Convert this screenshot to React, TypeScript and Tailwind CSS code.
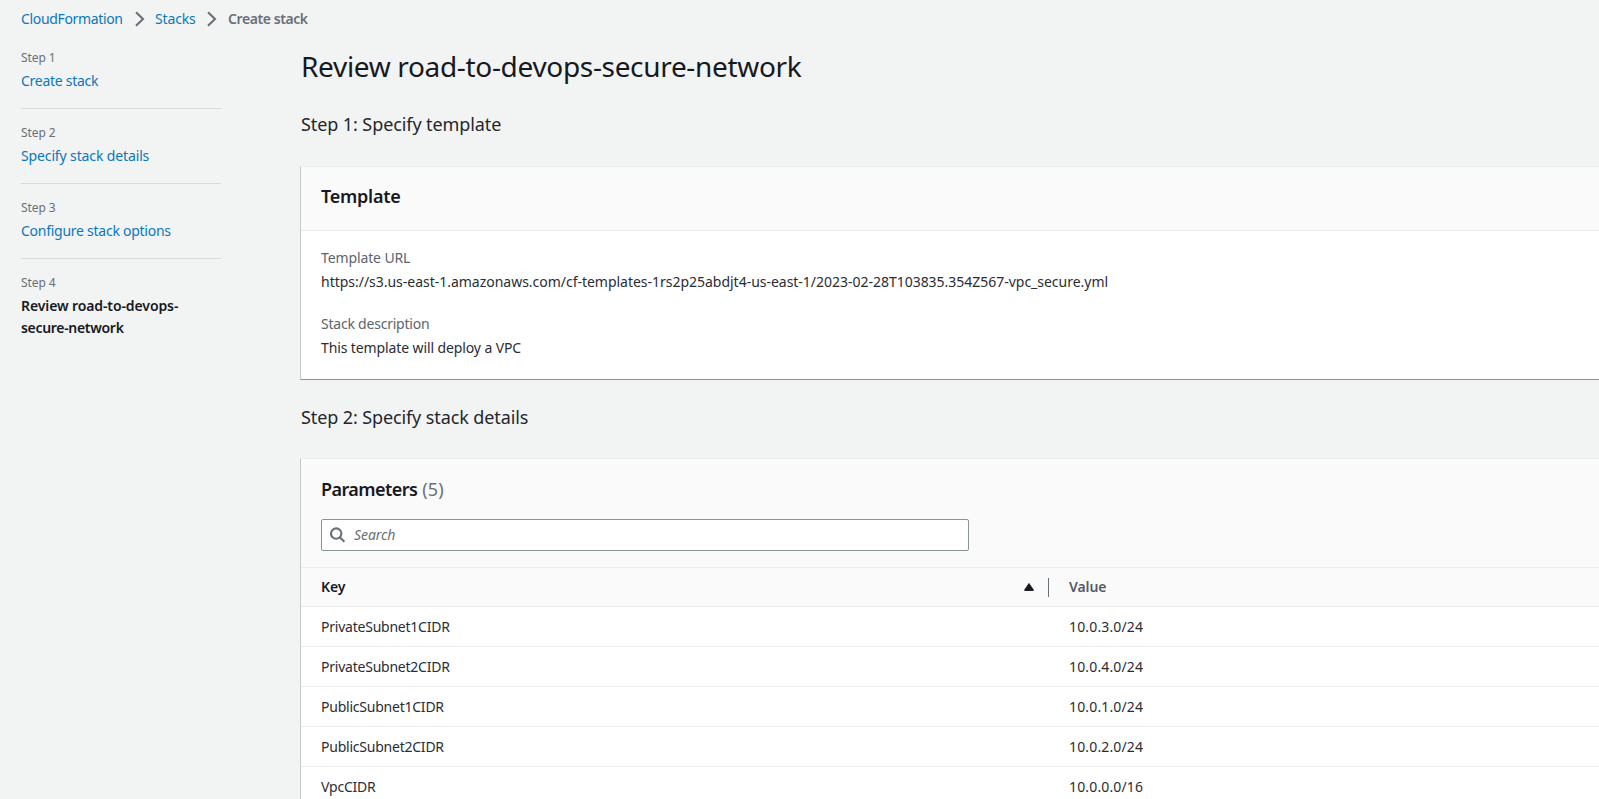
import type { ReactNode } from "react";

const steps = [
  { label: "Step 1", title: "Create stack", spacing: "tracking-[-0.27px]" },
  { label: "Step 2", title: "Specify stack details", spacing: "tracking-[-0.13px]" },
  { label: "Step 3", title: "Configure stack options", spacing: "tracking-[-0.26px]" },
];

const parameters = [
  { key: "PrivateSubnet1CIDR", value: "10.0.3.0/24" },
  { key: "PrivateSubnet2CIDR", value: "10.0.4.0/24" },
  { key: "PublicSubnet1CIDR", value: "10.0.1.0/24" },
  { key: "PublicSubnet2CIDR", value: "10.0.2.0/24" },
  { key: "VpcCIDR", value: "10.0.0.0/16" },
];

function Chevron() {
  return (
    <svg width="10" height="16" viewBox="0 0 10 16" fill="none" stroke="#687078" strokeWidth="2.1" className="shrink-0">
      <path d="M1 1.2l7 6.8-7 6.8" />
    </svg>
  );
}

function Card({ children, className }: { children: ReactNode; className: string }) {
  return (
    <section
      className={`border-t border-l border-t-[#eaeded] border-l-[#c4cacb] bg-white ${className}`}
    >
      {children}
    </section>
  );
}

export default function App() {
  return (
    <div className="flex h-[799px] w-[1599px] flex-col overflow-hidden bg-[#f2f3f3] font-['Noto_Sans',sans-serif] text-sm leading-[22px] text-[#16191f]">
      <nav className="flex h-[38px] shrink-0 items-center pl-[21px] text-[#0978be]">
        <a className="w-[102px] tracking-[-0.34px]">CloudFormation</a>
        <span className="ml-3 flex w-5 items-center">
          <Chevron />
        </span>
        <a className="w-[41px] tracking-[-0.14px]">Stacks</a>
        <span className="ml-[11px] flex w-[21px] items-center">
          <Chevron />
        </span>
        <span className="font-semibold tracking-[-0.42px] text-[#687078]">Create stack</span>
      </nav>

      <div className="flex min-h-0 flex-1">
        <aside className="ml-[21px] w-[200px] shrink-0 pt-[9px]">
          {steps.map((step) => (
            <div key={step.label} className="mb-[13px] h-[62px] border-b border-[#d5dbdb]">
              <div className="text-xs leading-[22px] tracking-[-0.09px] text-[#687078]">{step.label}</div>
              <a className={`mt-px block text-[#0978be] ${step.spacing}`}>{step.title}</a>
            </div>
          ))}
          <div>
            <div className="text-xs leading-[22px] tracking-[-0.09px] text-[#687078]">Step 4</div>
            <div className="mt-px font-semibold">
              <div className="tracking-[-0.1px]">Review road-to-devops-</div>
              <div className="tracking-[-0.31px]">secure-network</div>
            </div>
          </div>
        </aside>

        <main className="ml-[79px] flex min-w-0 flex-1 flex-col">
          <h1 className="mt-[10px] ml-px h-[36px] shrink-0 text-[28px] leading-[36px] tracking-[-0.33px]">
            Review road-to-devops-secure-network
          </h1>
          <h2 className="mt-[29px] ml-px h-[22px] shrink-0 text-lg leading-[22px] tracking-[-0.09px] text-[#23262c]">
            Step 1: Specify template
          </h2>

          <Card className="mt-[31px] h-[214px] shrink-0 border-b border-b-[#879596]">
            <header className="flex h-[64px] items-center border-b border-[#eaeded] bg-[#fafafa] pb-1.5 pl-5">
              <h3 className="text-lg font-semibold tracking-[-0.25px]">Template</h3>
            </header>
            <div className="pt-4 pl-5">
              <div className="tracking-[-0.12px] text-[#5d646d]">Template URL</div>
              <div className="mt-0.5 tracking-[-0.02px] text-[#2a2d33]">
                https://s3.us-east-1.amazonaws.com/cf-templates-1rs2p25abdjt4-us-east-1/2023-02-28T103835.354Z567-vpc_secure.yml
              </div>
              <div className="mt-5 tracking-[-0.22px] text-[#5d646d]">Stack description</div>
              <div className="mt-0.5 tracking-[-0.11px] text-[#2a2d33]">This template will deploy a VPC</div>
            </div>
          </Card>

          <h2 className="mt-[26px] ml-px h-[22px] shrink-0 text-lg leading-[22px] tracking-[-0.11px] text-[#23262c]">
            Step 2: Specify stack details
          </h2>

          <Card className="mt-[30px] h-[360px] shrink-0">
            <header className="h-[109px] border-b border-[#eaeded] bg-[#fafafa] pt-[19px] pl-5">
              <h3 className="flex gap-[5px] text-lg leading-[22px] font-semibold">
                <span className="tracking-[-0.57px]">Parameters</span>
                <span className="font-normal tracking-[0.2px] text-[#687078]">(5)</span>
              </h3>
              <div className="mt-[19px] flex h-8 w-[648px] items-center rounded-xs border border-[#879596] bg-white pl-2">
                <svg width="16" height="16" viewBox="0 0 16 16" fill="none" stroke="#687078" strokeWidth="2.1">
                  <circle cx="6.2" cy="6.6" r="5.2" />
                  <path d="M10 10.4l4.4 4.4" />
                </svg>
                <span className="ml-2 tracking-[-0.08px] text-[#687078] italic">Search</span>
              </div>
            </header>
            <div className="flex h-[39px] items-center border-b border-[#eaeded] bg-[#fafafa] font-semibold">
              <div className="flex w-[748px] items-center justify-between pl-5">
                <span className="tracking-[-0.05px]">Key</span>
                <span className="flex h-[19px] items-center border-r border-[#687078] pr-[14px]">
                  <svg width="10" height="8" viewBox="0 0 10 8" fill="#16191f" stroke="#16191f" strokeLinejoin="round">
                    <path d="M5 .6l4.3 6.3v.5H.7v-.5z" />
                  </svg>
                </span>
              </div>
              <span className="pl-5 tracking-[-0.1px] text-[#545b64]">Value</span>
            </div>
            {parameters.map((p) => (
              <div key={p.key} className="flex h-10 items-center border-b border-[#eaeded] text-[#2a2d33]">
                <span className="w-[748px] pl-5 tracking-[-0.23px]">{p.key}</span>
                <span className="pl-5 tracking-[0.15px]">{p.value}</span>
              </div>
            ))}
          </Card>
        </main>
      </div>
    </div>
  );
}
